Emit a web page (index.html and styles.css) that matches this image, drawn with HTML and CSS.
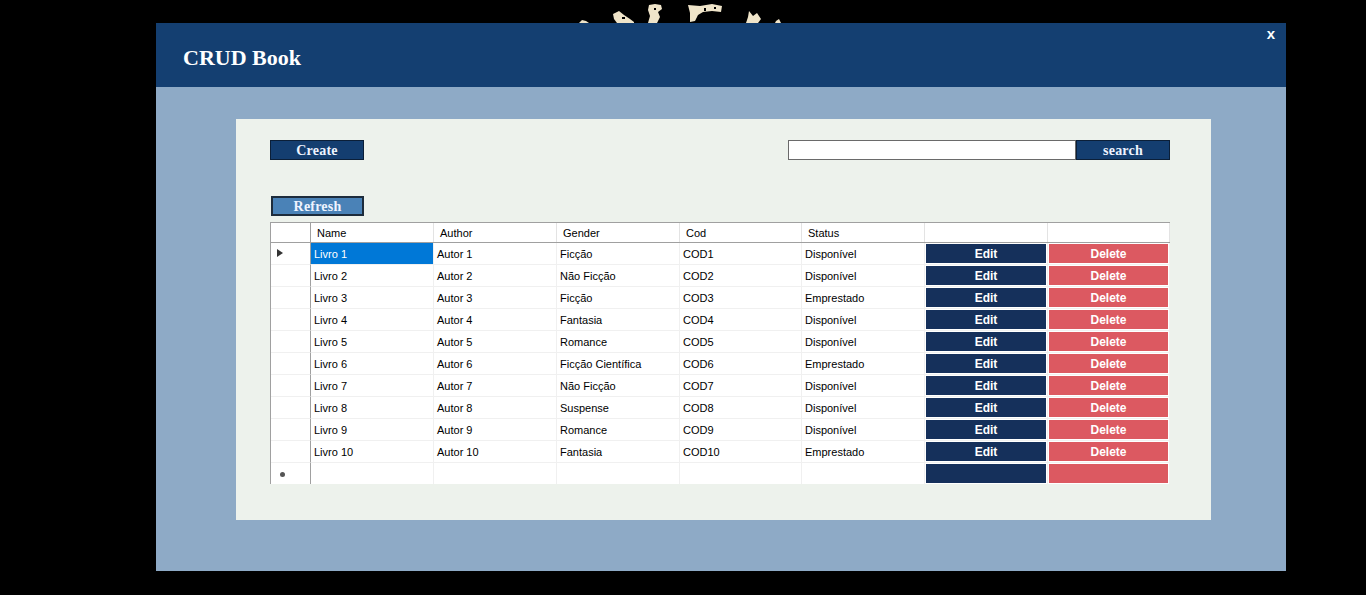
FILE: index.html
```html
<!DOCTYPE html>
<html lang="pt">
<head>
<meta charset="utf-8">
<title>CRUD Book</title>
<link rel="stylesheet" href="styles.css">
</head>
<body>
<svg class="backdrop" width="240" height="23" viewBox="560 0 240 23" aria-hidden="true">
  <g fill="#efe4c9">
    <polygon points="579,23 582,20 586,21 589,23"/>
    <polygon points="613,14 619,11 624,15 630,19 634,22 634,23 617,23 614,19"/>
    <polygon points="649,5 655,4 661,5 662,9 658,12 660,17 657,23 648,23 650,16 648,10"/>
    <polygon points="688,5 700,6 712,4 722,6 721,12 712,11 703,12 698,15 695,21 690,22 690,13"/>
    <polygon points="749,11 753,16 757,13 761,19 758,23 746,23 748,17"/>
    <polygon points="776,21 779,19 781,23 775,23"/>
  </g>
  <g fill="#000">
    <rect x="654" y="8" width="2" height="2"/>
    <rect x="704" y="8" width="2" height="3"/>
    <rect x="714" y="7" width="2" height="2"/>
    <rect x="622" y="17" width="3" height="2"/>
  </g>
</svg>

<div class="modal">
  <header class="modal-head">
    <h1 class="title">CRUD Book</h1>
    <span class="close">x</span>
  </header>
  <div class="modal-body">
    <section class="panel">
      <div class="toolbar">
        <button class="btn">Create</button>
        <div class="search">
          <input class="search-input" type="text">
          <button class="btn">search</button>
        </div>
      </div>
      <button class="btn btn-refresh">Refresh</button>

      <div class="grid">
        <div class="row head">
          <div class="rh"></div>
          <div class="hc">Name</div>
          <div class="hc">Author</div>
          <div class="hc">Gender</div>
          <div class="hc">Cod</div>
          <div class="hc">Status</div>
          <div class="hc"></div>
          <div class="hc"></div>
        </div>

        <div class="row">
          <div class="rh"><span class="arrow"></span></div>
          <div class="c sel">Livro 1</div><div class="c">Autor 1</div><div class="c">Ficção</div><div class="c">COD1</div><div class="c">Disponível</div>
          <div class="c act"><span class="edit">Edit</span></div><div class="c act"><span class="del">Delete</span></div>
        </div>
        <div class="row">
          <div class="rh"></div>
          <div class="c">Livro 2</div><div class="c">Autor 2</div><div class="c">Não Ficção</div><div class="c">COD2</div><div class="c">Disponível</div>
          <div class="c act"><span class="edit">Edit</span></div><div class="c act"><span class="del">Delete</span></div>
        </div>
        <div class="row">
          <div class="rh"></div>
          <div class="c">Livro 3</div><div class="c">Autor 3</div><div class="c">Ficção</div><div class="c">COD3</div><div class="c">Emprestado</div>
          <div class="c act"><span class="edit">Edit</span></div><div class="c act"><span class="del">Delete</span></div>
        </div>
        <div class="row">
          <div class="rh"></div>
          <div class="c">Livro 4</div><div class="c">Autor 4</div><div class="c">Fantasia</div><div class="c">COD4</div><div class="c">Disponível</div>
          <div class="c act"><span class="edit">Edit</span></div><div class="c act"><span class="del">Delete</span></div>
        </div>
        <div class="row">
          <div class="rh"></div>
          <div class="c">Livro 5</div><div class="c">Autor 5</div><div class="c">Romance</div><div class="c">COD5</div><div class="c">Disponível</div>
          <div class="c act"><span class="edit">Edit</span></div><div class="c act"><span class="del">Delete</span></div>
        </div>
        <div class="row">
          <div class="rh"></div>
          <div class="c">Livro 6</div><div class="c">Autor 6</div><div class="c">Ficção Científica</div><div class="c">COD6</div><div class="c">Emprestado</div>
          <div class="c act"><span class="edit">Edit</span></div><div class="c act"><span class="del">Delete</span></div>
        </div>
        <div class="row">
          <div class="rh"></div>
          <div class="c">Livro 7</div><div class="c">Autor 7</div><div class="c">Não Ficção</div><div class="c">COD7</div><div class="c">Disponível</div>
          <div class="c act"><span class="edit">Edit</span></div><div class="c act"><span class="del">Delete</span></div>
        </div>
        <div class="row">
          <div class="rh"></div>
          <div class="c">Livro 8</div><div class="c">Autor 8</div><div class="c">Suspense</div><div class="c">COD8</div><div class="c">Disponível</div>
          <div class="c act"><span class="edit">Edit</span></div><div class="c act"><span class="del">Delete</span></div>
        </div>
        <div class="row">
          <div class="rh"></div>
          <div class="c">Livro 9</div><div class="c">Autor 9</div><div class="c">Romance</div><div class="c">COD9</div><div class="c">Disponível</div>
          <div class="c act"><span class="edit">Edit</span></div><div class="c act"><span class="del">Delete</span></div>
        </div>
        <div class="row">
          <div class="rh"></div>
          <div class="c">Livro 10</div><div class="c">Autor 10</div><div class="c">Fantasia</div><div class="c">COD10</div><div class="c">Emprestado</div>
          <div class="c act"><span class="edit">Edit</span></div><div class="c act"><span class="del">Delete</span></div>
        </div>
        <div class="row last">
          <div class="rh"><span class="star"></span></div>
          <div class="c"></div><div class="c"></div><div class="c"></div><div class="c"></div><div class="c"></div>
          <div class="c act"><span class="edit"></span></div><div class="c act"><span class="del"></span></div>
        </div>
      </div>
    </section>
  </div>
</div>
</body>
</html>
```

FILE: styles.css
```css
* { box-sizing: border-box; }

html, body {
  margin: 0;
  padding: 0;
  background: #000;
  height: 595px;
  overflow: hidden;
}

body {
  position: relative;
  font-family: "Liberation Sans", Arial, sans-serif;
}

.backdrop {
  position: absolute;
  left: 560px;
  top: 0;
}

.modal {
  position: relative;
  margin: 23px 0 0 156px;
  width: 1130px;
  height: 548px;
  display: flex;
  flex-direction: column;
  background: #8eaac6;
}

.modal-head {
  height: 64px;
  background: #143f71;
  display: flex;
  justify-content: space-between;
  align-items: flex-start;
  padding: 0 11px 0 27px;
}

.title {
  margin: 22px 0 0 0;
  font-family: "Liberation Serif", "Times New Roman", serif;
  font-weight: bold;
  font-size: 22px;
  line-height: 25px;
  color: #fff;
}

.close {
  margin-top: 2px;
  font-family: "Liberation Sans", Arial, sans-serif;
  font-weight: bold;
  font-size: 15px;
  line-height: 18px;
  color: #fff;
}

.modal-body {
  flex: 1;
  padding: 32px 75px 0 80px;
}

.panel {
  width: 975px;
  height: 401px;
  background: #edf2ec;
  padding: 21px 41px 0 34px;
  display: flex;
  flex-direction: column;
  align-items: flex-start;
}

.toolbar {
  width: 900px;
  display: flex;
  justify-content: space-between;
}

.btn {
  height: 20px;
  width: 94px;
  padding: 0;
  margin: 0;
  border: 1px solid #0b1f38;
  background: #143e70;
  color: #eef4ff;
  font-family: "Liberation Serif", "Times New Roman", serif;
  font-weight: bold;
  font-size: 14px;
  line-height: 17px;
  letter-spacing: 0.2px;
}

.search {
  display: flex;
}

.search-input {
  width: 288px;
  height: 20px;
  margin: 0;
  border: 1px solid #6a6a6a;
  background: #fff;
  padding: 0 2px;
}

.btn-refresh {
  margin: 36px 0 0 1px;
  width: 93px;
  border: 2px solid #1d2c3c;
  background: #4a82b7;
  line-height: 15px;
}

.grid {
  margin-top: 6px;
  width: 900px;
  border-left: 1px solid #a0a0a0;
  border-top: 1px solid #a0a0a0;
  background: #fff;
  font-size: 11px;
  color: #000;
}

.row {
  display: grid;
  grid-template-columns: 40px 123px 123px 123px 122px 123px 123px 122px;
  height: 22px;
}

.row.head {
  height: 20px;
  border-bottom: 1px solid #a0a0a0;
}

.row.last {
  height: 21px;
}

.rh {
  border-right: 1px solid #a0a0a0;
  border-bottom: 1px solid #f0f0f0;
  position: relative;
  background: #fff;
}

.head .rh { border-bottom: none; }
.last .rh, .last .c { border-bottom: none; }

.hc {
  border-right: 1px solid #e3e3e3;
  padding-left: 6px;
  display: flex;
  align-items: center;
}

.c {
  border-right: 1px solid #f0f0f0;
  border-bottom: 1px solid #f0f0f0;
  padding-left: 3px;
  display: flex;
  align-items: center;
  white-space: nowrap;
  overflow: hidden;
}

.c.sel {
  background: #0078d7;
  color: #fff;
}

.c.act {
  padding: 1px 1px 1px 1px;
  border-bottom-color: #f0f0f0;
}

.edit, .del {
  flex: 1;
  height: 100%;
  display: flex;
  align-items: center;
  justify-content: center;
  font-weight: bold;
  font-size: 12px;
  color: #fff;
}

.edit { background: #15305b; }
.del { background: #dc5961; }

.arrow {
  position: absolute;
  left: 6px;
  top: 6px;
  width: 0;
  height: 0;
  border-top: 4.5px solid transparent;
  border-bottom: 4.5px solid transparent;
  border-left: 6px solid #333;
}

.star {
  position: absolute;
  left: 9px;
  top: 9px;
  width: 5px;
  height: 5px;
  border-radius: 50%;
  background: #555;
}
```
